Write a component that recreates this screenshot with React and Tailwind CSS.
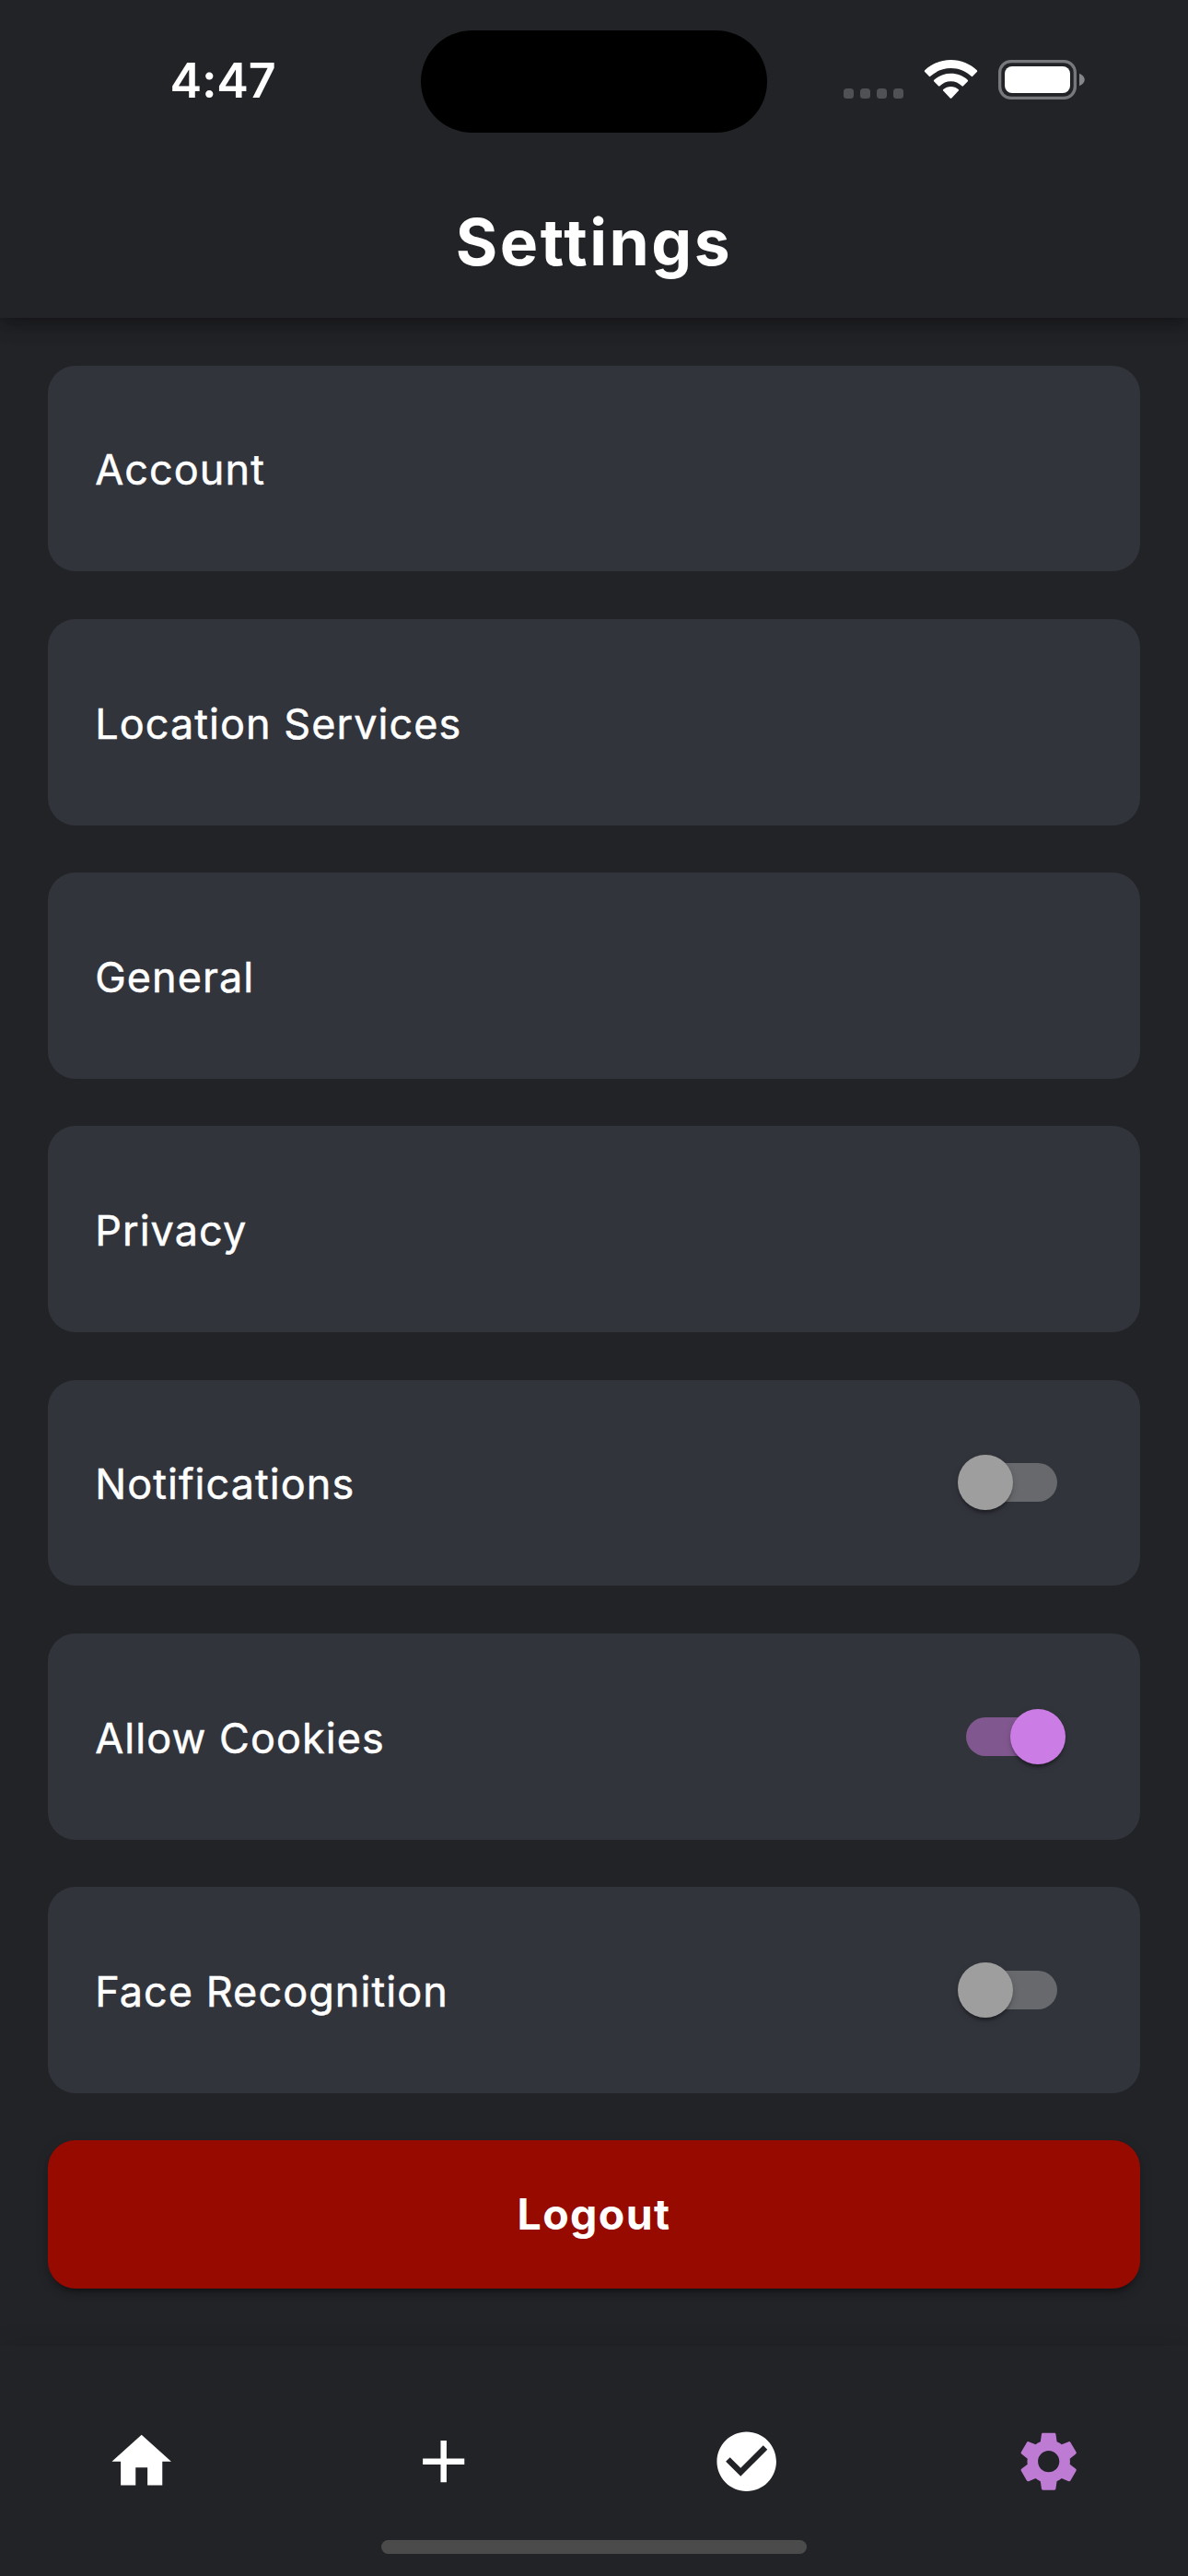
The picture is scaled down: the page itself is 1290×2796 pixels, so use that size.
import React, { useState } from "react";

const ROWS = [
  { label: "Account" },
  { label: "Location Services" },
  { label: "General" },
  { label: "Privacy" },
  { label: "Notifications", toggle: true, on: false },
  { label: "Allow Cookies", toggle: true, on: true },
  { label: "Face Recognition", toggle: true, on: false },
];

const NAV = [
  { name: "Home", color: "text-white", d: "M10 20v-6h4v6h5v-8h3L12 3 2 12h3v8z" },
  { name: "Add", color: "text-white", d: "M19 13h-6v6h-2v-6H5v-2h6V5h2v6h6v2z" },
  {
    name: "Done",
    color: "text-white",
    d: "M12 2C6.48 2 2 6.48 2 12s4.48 10 10 10 10-4.48 10-10S17.52 2 12 2zm-2 15l-5-5 1.41-1.41L10 14.17l7.59-7.59L19 8l-9 9z",
  },
  {
    name: "Settings",
    color: "text-[#be7bd3]",
    d: "M19.14 12.94c.04-.3.06-.61.06-.94 0-.32-.02-.64-.07-.94l2.03-1.58c.18-.14.23-.41.12-.61l-1.92-3.32c-.12-.22-.37-.29-.59-.22l-2.39.96c-.5-.38-1.03-.7-1.62-.94l-.36-2.54c-.04-.24-.24-.41-.48-.41h-3.84c-.24 0-.43.17-.47.41l-.36 2.54c-.59.24-1.13.57-1.62.94l-2.39-.96c-.22-.08-.47 0-.59.22L2.74 8.87c-.12.21-.08.47.12.61l2.03 1.58c-.05.3-.09.63-.09.94s.02.64.07.94l-2.03 1.58c-.18.14-.23.41-.12.61l1.92 3.32c.12.22.37.29.59.22l2.39-.96c.5.38 1.03.7 1.62.94l.36 2.54c.05.24.24.41.48.41h3.84c.24 0 .44-.17.47-.41l.36-2.54c.59-.24 1.13-.56 1.62-.94l2.39.96c.22.08.47 0 .59-.22l1.92-3.32c.12-.22.07-.47-.12-.61l-2.01-1.58zM12 15.6c-1.98 0-3.6-1.62-3.6-3.6s1.62-3.6 3.6-3.6 3.6 1.62 3.6 3.6-1.62 3.6-3.6 3.6z",
  },
];

function StatusBar() {
  return (
    <div className="flex h-[177px] items-start">
      <div className="ml-[184.5px] mt-[56px] w-[272.5px] text-[52px] leading-[64px] font-semibold tracking-[-0.2px]">
        4:47
      </div>
      <div className="mt-[33px] h-[111px] w-[376px] rounded-full bg-black" />
      <div className="mt-[96px] ml-[83px] flex gap-[7px]">
        {[0, 1, 2, 3].map((i) => (
          <span key={i} className="size-[11px] rounded-[3.5px] bg-[#505155]" />
        ))}
      </div>
      <svg className="mt-[64px] ml-[21px] h-[44px] w-[60px] fill-white" viewBox="0 0 60 44">
        <path d="M30.5 1C41.500 1 51.500 5.300 58.800 12.300Q59.600 13.200 58.800 14L54.200 18.700Q53.500 19.500 52.700 18.800C46.500 13.200 39 10 30.500 10S14.500 13.200 8.300 18.800Q7.500 19.500 6.800 18.700L2.200 14Q1.400 13.200 2.200 12.300C9.500 5.300 19.500 1 30.500 1Z" />
        <path d="M30.500 15.800C37.500 15.800 43.700 18.300 48.700 22.700Q49.600 23.600 48.700 24.400L44 29.200Q43.200 30 42.400 29.300C39.200 26.200 35.200 24.300 30.500 24.300S21.800 26.200 18.600 29.300Q17.800 30 17 29.200L12.300 24.400Q11.400 23.600 12.300 22.700C17.300 18.300 23.500 15.800 30.500 15.800Z" />
        <path d="M30.500 30C33.600 30 36.300 31 38.700 32.900Q39.600 33.700 38.800 34.600L31.300 42.400Q30.500 43.200 29.700 42.400L22.200 34.600Q21.400 33.700 22.300 32.900C24.700 31 27.400 30 30.500 30Z" />
      </svg>
      <svg className="mt-[65px] ml-[22px] h-[43px] w-[96px]" viewBox="0 0 96 43">
        <rect x="1.650" y="1.650" width="81.700" height="39.700" rx="12" fill="none" stroke="#77787b" strokeWidth="3.300" />
        <rect x="7" y="7" width="71" height="29" rx="8" fill="#fff" />
        <path d="M88 14.800C91.300 16.200 93.800 18.600 93.800 21.500S91.300 26.800 88 28.200Z" fill="#858689" />
      </svg>
    </div>
  );
}

function Toggle({ on, onChange }) {
  return (
    <button
      type="button"
      role="switch"
      aria-checked={on}
      onClick={onChange}
      className={
        on
          ? "relative mr-[90px] h-[42px] w-[99px] rounded-full bg-[#80588f]"
          : "relative mr-[90px] h-[42px] w-[99px] rounded-full bg-[#68696c]"
      }
    >
      <span
        className={
          on
            ? "absolute -top-[9px] left-[48px] size-[60px] rounded-full bg-[#cb7de5] shadow-[0_6px_3px_-3px_rgba(0,0,0,0.2),0_3px_3px_0_rgba(0,0,0,0.14),0_3px_9px_0_rgba(0,0,0,0.12)]"
            : "absolute -top-[9px] -left-[9px] size-[60px] rounded-full bg-[#9e9e9e] shadow-[0_6px_3px_-3px_rgba(0,0,0,0.2),0_3px_3px_0_rgba(0,0,0,0.14),0_3px_9px_0_rgba(0,0,0,0.12)]"
        }
      />
    </button>
  );
}

export default function App() {
  const [rows, setRows] = useState(ROWS);
  const flip = (label) =>
    setRows(rows.map((r) => (r.label === label ? { ...r, on: !r.on } : r)));

  return (
    <div className="flex h-[2796px] w-[1290px] flex-col overflow-hidden bg-[#222327] font-['Inter','Liberation_Sans',sans-serif] text-white">
      <header className="relative z-10 h-[345px] shrink-0 bg-[#222327] shadow-[0_6px_12px_-3px_rgba(0,0,0,0.2),0_12px_15px_0_rgba(0,0,0,0.14),0_3px_30px_0_rgba(0,0,0,0.12)]">
        <StatusBar />
        <h1 className="pt-[44px] text-center text-[69.500px] leading-[84px] font-bold tracking-[2.5px]">
          Settings
        </h1>
      </header>

      <main className="flex h-[2201px] shrink-0 flex-col gap-[51.6px] px-[51.6px] pt-[51.6px]">
        {rows.map((r) => (
          <section
            key={r.label}
            className="flex h-[223.68px] shrink-0 items-center justify-between rounded-[30px] bg-[#32343c] pl-[51.6px]"
          >
            <span className="pt-[4px] text-[45px] leading-[56px] font-normal tracking-[1.05px] [-webkit-text-stroke:0.5px_white]">{r.label}</span>
            {r.toggle && <Toggle on={r.on} onChange={() => flip(r.label)} />}
          </section>
        ))}
        <button
          type="button"
          className="h-[160.500px] shrink-0 rounded-[30px] bg-[#960a00] pb-[2px] text-[46.500px] leading-[56px] font-bold tracking-[1.4px] shadow-[0_9px_3px_-6px_rgba(0,0,0,0.2),0_6px_6px_0_rgba(0,0,0,0.14),0_3px_15px_0_rgba(0,0,0,0.12)]"
        >
          Logout
        </button>
      </main>

      <footer className="relative flex grow flex-col bg-[#222327] shadow-[0_0_24px_0_rgba(0,0,0,0.13)]">
        <nav className="flex gap-[250.9px] pt-[86.6px] pl-[115px]">
          {NAV.map((n) => (
            <button key={n.name} type="button" aria-label={n.name} className={n.color}>
              <svg viewBox="0 0 24 24" className="size-[77.4px] fill-current">
                <path d={n.d} />
              </svg>
            </button>
          ))}
        </nav>
        <div className="mx-auto mt-[47px] h-[15px] w-[462px] rounded-full bg-[#4b4b4b]" />
      </footer>
    </div>
  );
}
